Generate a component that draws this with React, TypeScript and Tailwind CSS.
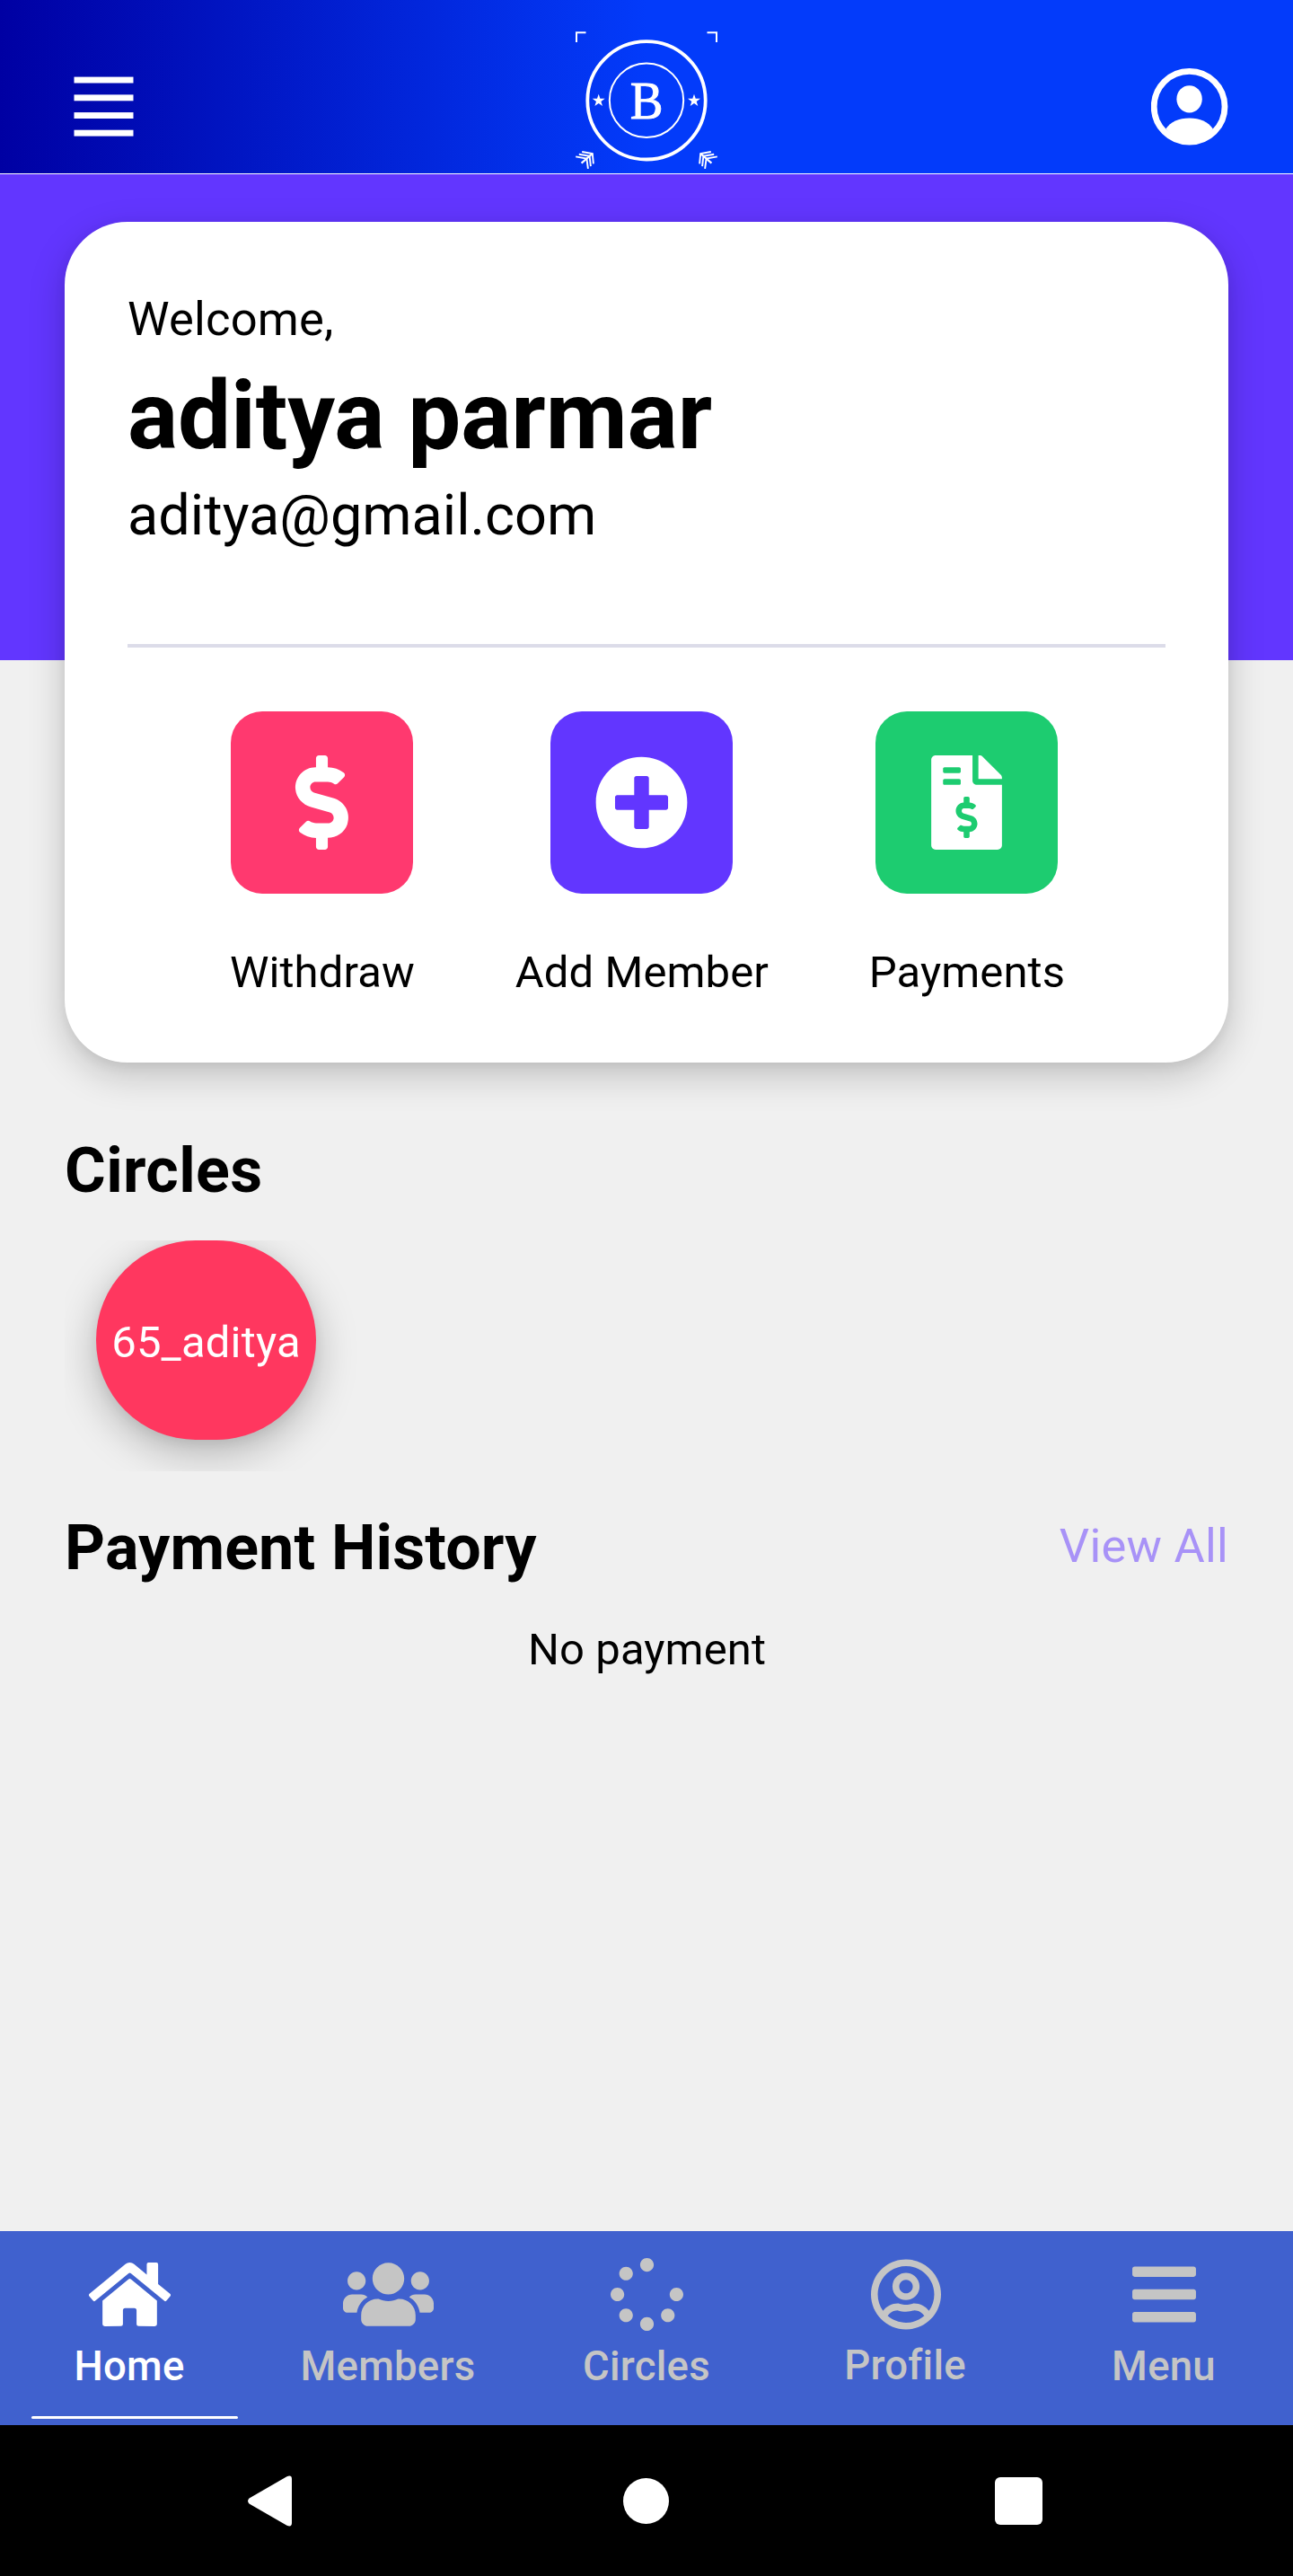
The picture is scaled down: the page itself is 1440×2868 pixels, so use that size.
import type { IconType } from "react-icons";
import {
  FaBars,
  FaDollarSign,
  FaFileInvoiceDollar,
  FaHome,
  FaPlusCircle,
  FaRegUserCircle,
  FaSpinner,
  FaUsers,
} from "react-icons/fa";

function HeaderMenuIcon() {
  return (
    <svg className="h-[67px] w-[67px]" viewBox="0 0 67 67" fill="#fff">
      <rect x="0.5" y="0.6" width="66" height="6.9" />
      <rect x="0.5" y="20.4" width="66" height="6.9" />
      <rect x="0.5" y="40.1" width="66" height="6.9" />
      <rect x="0.5" y="59.7" width="66" height="6.9" />
    </svg>
  );
}

function Laurel() {
  return (
    <g fill="none" stroke="#fff" strokeWidth="1.9">
      <path d="M8.2 134 L19.8 136 L20.9 147.4" />
      <path d="M4.8 136.8 L16.6 138.8 L17.9 150.2" />
      <path d="M1.2 139.4 L13.4 141.6 L14.9 152.8" />
      <path d="M7.6 146.6 L19.8 136" strokeWidth="2.2" />
    </g>
  );
}

function Star({ x }: { x: number }) {
  return (
    <path
      transform={`translate(${x} 77)`}
      fill="#fff"
      d="M0 -7.2 L1.7 -2.2 L7 -2.2 L2.7 0.9 L4.3 6 L0 2.9 L-4.3 6 L-2.7 0.9 L-7 -2.2 L-1.7 -2.2 Z"
    />
  );
}

function Logo() {
  return (
    <svg className="h-[158px] w-[160px]" viewBox="0 0 160 158">
      <g fill="none" stroke="#fff">
        <path d="M2 12 V1.3 H12.5 M147.5 1.3 H158 V12" strokeWidth="2" />
        <circle cx="80" cy="76.8" r="65.7" strokeWidth="3.8" />
        <circle cx="80" cy="76.8" r="41.2" strokeWidth="2" />
      </g>
      <Star x={26.7} />
      <Star x={133} />
      <text
        transform="translate(80.2 96.6) scale(0.92 1)"
        textAnchor="middle"
        fontSize="60"
        fill="#fff"
        stroke="#fff"
        strokeWidth="0.9"
        className="font-['Liberation_Serif',serif]"
      >
        B
      </text>
      <Laurel />
      <g transform="translate(160 0) scale(-1 1)">
        <Laurel />
      </g>
    </svg>
  );
}

function AvatarIcon() {
  return (
    <svg className="h-[86px] w-[86px]" viewBox="0 0 86 86">
      <circle cx="42.6" cy="42.8" r="39.4" fill="none" stroke="#fff" strokeWidth="6.8" />
      <ellipse cx="42.6" cy="34.3" rx="14.2" ry="15.1" fill="#fff" />
      <path d="M16.3 67.6 C21.8 59.4 30.6 55.4 42.6 55.4 S63.4 59.4 68.9 67.6 C62 77 53.6 81 42.6 81 S24 77 16.3 67.6Z" fill="#fff" />
    </svg>
  );
}

const actions: { label: string; Icon: IconType; tile: string }[] = [
  { label: "Withdraw", Icon: FaDollarSign, tile: "bg-[#ff396f]" },
  { label: "Add Member", Icon: FaPlusCircle, tile: "bg-[#6236ff]" },
  { label: "Payments", Icon: FaFileInvoiceDollar, tile: "bg-[#1dcc70]" },
];

const tabs: { label: string; Icon: IconType; size: string; color: string; lift: string }[] = [
  { label: "Home", Icon: FaHome, size: "w-[91px]", color: "text-white", lift: "pt-[13px]" },
  { label: "Members", Icon: FaUsers, size: "w-[101px]", color: "text-[#c5c5c5]", lift: "pt-[13px]" },
  { label: "Circles", Icon: FaSpinner, size: "w-[81px]", color: "text-[#c5c5c5]", lift: "pt-[13px]" },
  { label: "Profile", Icon: FaRegUserCircle, size: "w-[78px]", color: "text-[#c5c5c5]", lift: "pt-[12px]" },
  { label: "Menu", Icon: FaBars, size: "w-[71px]", color: "text-[#c5c5c5]", lift: "pt-[13px]" },
];

function Header() {
  return (
    <header className="flex h-[194px] items-start justify-between border-b border-white bg-[linear-gradient(to_right,#0000a3_0%,#033bfa_50%)] pr-[72px] pl-[82px]">
      <div className="w-[86px] pt-[85px]">
        <HeaderMenuIcon />
      </div>
      <div className="mr-[10px] pt-[35px]">
        <Logo />
      </div>
      <div className="pt-[76px]">
        <AvatarIcon />
      </div>
    </header>
  );
}

function WelcomeCard() {
  return (
    <section className="mx-[72px] h-[936px] rounded-[70px] bg-white px-[70px] pt-[78px] shadow-[0_14px_42px_rgba(0,0,0,0.2),0_4px_14px_rgba(0,0,0,0.06)]">
      <p className="text-[52.5px] leading-[60px] tracking-[0.2px]">Welcome,</p>
      <h1 className="mt-[17px] text-[105px] leading-[124px] font-bold tracking-[-0.1px]">aditya parmar</h1>
      <p className="mt-[11px] text-[63px] leading-[74px]">aditya@gmail.com</p>
      <div className="mt-[106px] h-[4px] bg-[#dcdce9]" />
      <div className="mt-[71px] flex justify-evenly pl-[2px]">
        {actions.map(({ label, Icon, tile }) => (
          <div key={label} className="flex flex-col items-center">
            <div className={`flex h-[203px] w-[203px] items-center justify-center rounded-[35px] text-white ${tile}`}>
              <Icon className="h-[105px] w-auto" />
            </div>
            <span className="mt-[59px] text-[49px] leading-[58px] tracking-[0.1px]">{label}</span>
          </div>
        ))}
      </div>
    </section>
  );
}

function TabBar() {
  return (
    <nav className="flex h-[216px] bg-[#4061ce]">
      {tabs.map(({ label, Icon, size, color, lift }, i) => (
        <div key={label} className={`relative flex w-[288px] flex-col items-center pt-[30px] ${color}`}>
          <Icon className={`ml-[1px] h-[81px] ${size}`} />
          <span className={`text-[45.5px] leading-[54px] font-medium tracking-[0.25px] ${lift}`}>{label}</span>
          {i === 0 && <div className="absolute bottom-[7px] left-[35px] h-[3px] w-[230px] rounded-full bg-white" />}
        </div>
      ))}
    </nav>
  );
}

function SystemBar() {
  return (
    <div className="flex h-[168px] items-center justify-between bg-black pr-[279px] pl-[276px]">
      <svg className="h-[57px] w-[55px]" viewBox="0 0 55 57" fill="#fff">
        <path d="M1.5 25.5 L43.5 1.2 Q49 -1 49 4 V53 Q49 58 43.5 55.8 L1.5 31.5 Q-1.3 28.5 1.5 25.5Z" />
      </svg>
      <div className="h-[51px] w-[51px] rounded-full bg-white" />
      <div className="h-[53px] w-[53px] rounded-[6px] bg-white" />
    </div>
  );
}

export default function App() {
  return (
    <div className="flex h-[2868px] w-[1440px] flex-col bg-[#f0f0f0] font-[Roboto,sans-serif] text-black">
      <Header />
      <main className="flex-1">
        <div className="h-[541px] bg-[#6236ff] pt-[53px]">
          <WelcomeCard />
        </div>
        <div className="px-[72px] pt-[527px]">
          <h2 className="text-[70px] leading-[82px] font-bold tracking-[0.35px]">Circles</h2>
          <div className="mt-[37px] h-[257px] overflow-hidden pl-[35px]">
            <div className="flex h-[222px] w-[245px] items-center justify-center rounded-full bg-[#ff375f] pt-[5px] text-[49px] leading-[58px] tracking-[0.2px] text-white shadow-[0_14px_46px_rgba(0,0,0,0.26),0_4px_14px_rgba(0,0,0,0.06)]">
              65_aditya
            </div>
          </div>
          <div className="mt-[44px] flex items-start justify-between">
            <h2 className="text-[70px] leading-[82px] font-bold tracking-[0.15px]">Payment History</h2>
            <span className="pt-[9px] text-[52.5px] leading-[60px] tracking-[0.25px] text-[#6236ff] opacity-50">View All</span>
          </div>
          <p className="mt-[44px] pl-[1px] text-center text-[49px] leading-[58px] tracking-[0.1px]">No payment</p>
        </div>
      </main>
      <TabBar />
      <SystemBar />
    </div>
  );
}
